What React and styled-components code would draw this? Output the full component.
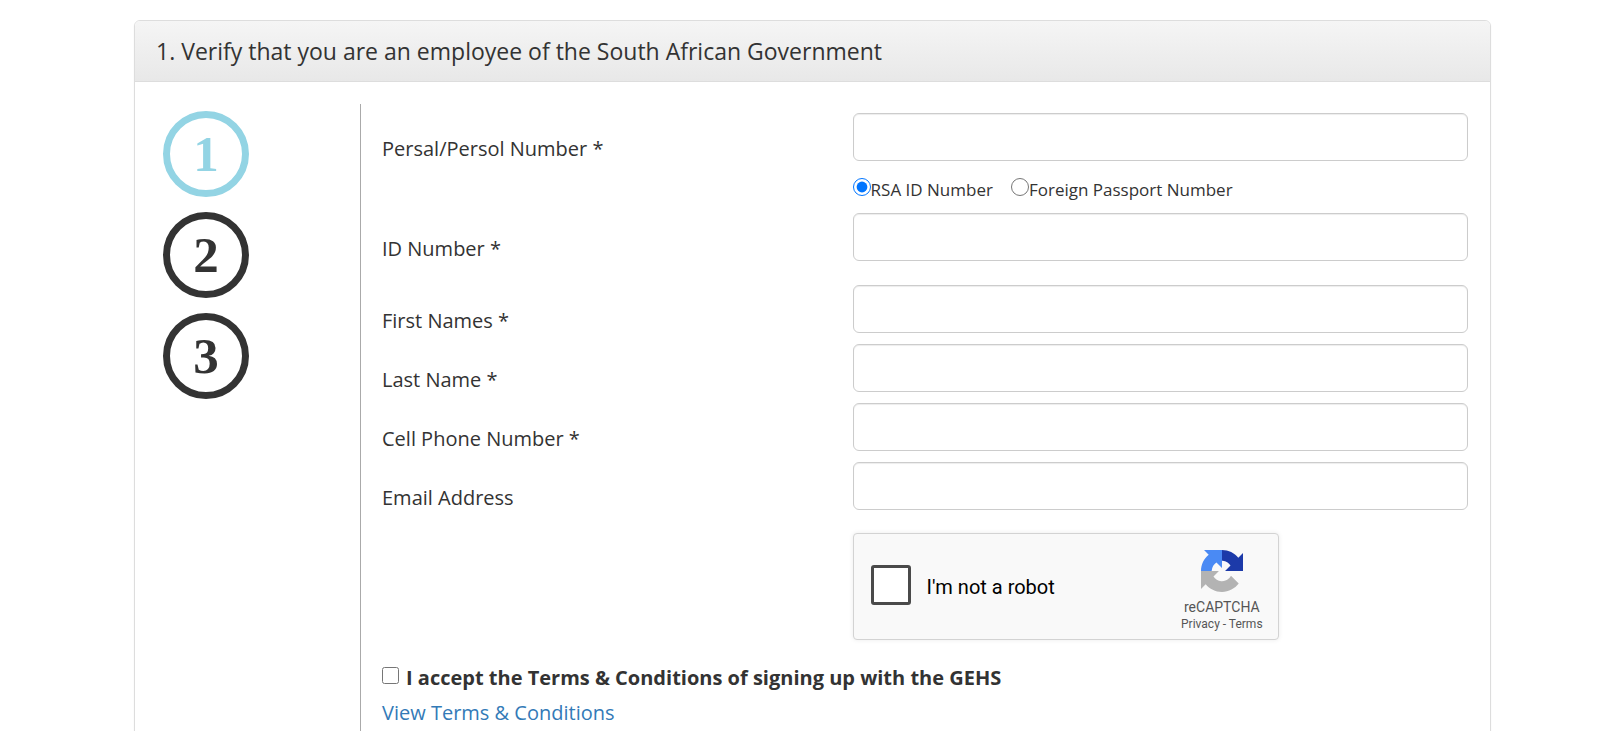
import React, { useState } from "react";
import styled, { createGlobalStyle } from "styled-components";

const steps = [1, 2, 3];

const personalFields = [
    { id: "firstNames", label: "First Names *", type: "text" },
    { id: "lastName", label: "Last Name *", type: "text" },
    { id: "cellPhone", label: "Cell Phone Number *", type: "tel" },
    { id: "email", label: "Email Address", type: "email" },
];

function Field({ id, label, type = "text" }) {
    return (
        <Row>
            <Label htmlFor={id}>{label}</Label>
            <TextInput id={id} name={id} type={type} />
        </Row>
    );
}

function RecaptchaLogo() {
    return (
        <Logo viewBox="0 0 64 64" aria-hidden="true">
            <path fill="#1c3aa9" d="M64 32V4.700l-7.160 7.160C50.980 4.670 42.050.09 32 .09v16.270c.485 0 .86.057 1.135.163 4.976.393 9.288 3.140 11.828 7.124L36.660 32z" />
            <path fill="#4a8af4" d="M32 .09H4.600l7.160 7.160C4.580 13.110 0 22.040 0 32h16.270c0-.485.057-.86.163-1.135.393-4.976 3.140-9.288 7.124-11.828L32 27.340z" />
            <path fill="#b3b3b3" d="M0 32v27.270l7.160-7.160c5.860 7.173 14.790 11.754 24.790 11.754 10.408 0 19.656-4.960 25.500-12.645L45.710 39.360a15.550 15.550 0 0 1-4.754 5.334c-2.050 1.600-4.952 2.906-8.968 2.906-.485 0-.86-.057-1.135-.163-4.976-.393-9.288-3.140-11.828-7.124L27.330 32z" />
        </Logo>
    );
}

function Recaptcha() {
    return (
        <Captcha>
            <CaptchaLabel>
                <CaptchaCheck type="checkbox" name="notRobot" />
                I'm not a robot
            </CaptchaLabel>
            <CaptchaBrand>
                <RecaptchaLogo />
                <BrandName>reCAPTCHA</BrandName>
                <BrandLinks>
                    <a href="#privacy">Privacy</a> - <a href="#terms">Terms</a>
                </BrandLinks>
            </CaptchaBrand>
        </Captcha>
    );
}

function App() {
    const [idType, setIdType] = useState("rsa");

    return (
        <Page>
            <GlobalStyle />
            <Panel>
                <PanelHeading>1. Verify that you are an employee of the South African Government</PanelHeading>
                <PanelBody>
                    <Steps>
                        {steps.map((step) => (
                            <Step key={step} $active={step === 1}>{step}</Step>
                        ))}
                    </Steps>
                    <Form>
                        <Field id="persal" label="Persal/Persol Number *" />
                        <Row>
                            <RadioGroup>
                                <RadioLabel>
                                    <Radio type="radio" name="idType" checked={idType === "rsa"} onChange={() => setIdType("rsa")} />
                                    RSA ID Number
                                </RadioLabel>
                                <RadioLabel>
                                    <Radio type="radio" name="idType" checked={idType === "passport"} onChange={() => setIdType("passport")} />
                                    Foreign Passport Number
                                </RadioLabel>
                            </RadioGroup>
                        </Row>
                        <Field id="idNumber" label="ID Number *" />
                        <Personal>
                            {personalFields.map((field) => (
                                <Field key={field.id} {...field} />
                            ))}
                        </Personal>
                        <Row>
                            <Recaptcha />
                        </Row>
                        <Accept>
                            <AcceptCheck type="checkbox" name="accept" />
                            I accept the Terms &amp; Conditions of signing up with the GEHS
                        </Accept>
                        <TermsLink href="#view-terms">View Terms &amp; Conditions</TermsLink>
                    </Form>
                </PanelBody>
            </Panel>
        </Page>
    );
}

const GlobalStyle = createGlobalStyle`
    *{
        box-sizing: border-box;
    }
    body{
        margin: 0;
        background: #ffffff;
        color: #333333;
        font-family: "Open Sans", sans-serif;
        font-size: 20px;
        line-height: 28px;
    }
`;

const Page = styled.main`
    padding: 20px 109px 0 134px;
`;

const Panel = styled.section`
    border: 1px solid #dddddd;
    border-radius: 6px;
    box-shadow: 0 1px 2px rgba(0, 0, 0, 0.05);
    overflow: hidden;
`;

const PanelHeading = styled.h1`
    margin: 0;
    padding: 15px 21px;
    border-bottom: 1px solid #dddddd;
    background: linear-gradient(to bottom, #f5f5f5, #e8e8e8);
    font-size: 23px;
    font-weight: 400;
    line-height: 30px;
`;

const PanelBody = styled.div`
    display: flex;
    padding: 22px;
`;

const Steps = styled.div`
    display: flex;
    flex: 0 0 203px;
    flex-direction: column;
    gap: 15px;
    padding: 7px 6px;
`;

const Step = styled.div`
    display: flex;
    align-items: center;
    justify-content: center;
    width: 86px;
    height: 86px;
    border: 7px solid currentColor;
    border-radius: 50%;
    color: ${({ $active }) => ($active ? "#93d4e4" : "#333333")};
    font-family: "Liberation Serif", serif;
    font-size: 51px;
    font-weight: 700;
    line-height: 56px;
`;

const Form = styled.form`
    display: flex;
    flex: 1;
    flex-direction: column;
    min-width: 0;
    padding: 9px 0 40px 21px;
    border-left: 1px solid #aaaaaa;
`;

const Row = styled.div`
    display: grid;
    grid-template-columns: 13fr 17fr;
`;

const Label = styled.label`
    padding-top: 22px;
    line-height: 28px;
    height: 48px;
`;

const TextInput = styled.input`
    width: 100%;
    height: 48px;
    padding: 8px 16px;
    border: 1px solid #cccccc;
    border-radius: 6px;
    background: #ffffff;
    box-shadow: inset 0 1px 1px rgba(0, 0, 0, 0.075);
    color: #555555;
    font: inherit;
`;

const RadioGroup = styled.div`
    display: flex;
    grid-column: 2;
    gap: 18px;
    padding: 17px 0 11px;
    font-size: 17px;
    line-height: 24px;
`;

const RadioLabel = styled.label`
    display: flex;
`;

const Radio = styled.input`
    width: 18px;
    height: 18px;
    margin: 0;
    accent-color: #0075ff;
`;

const Personal = styled.div`
    display: flex;
    flex-direction: column;
    gap: 11px;
    padding: 24px 0 23px;
`;

const Captcha = styled.div`
    display: flex;
    grid-column: 2;
    justify-content: space-between;
    width: 426px;
    height: 107px;
    padding: 0 15px 0 17px;
    border: 1px solid #d3d3d3;
    border-radius: 4px;
    background: #f9f9f9;
    box-shadow: 0 0 5px rgba(0, 0, 0, 0.08);
    font-family: Roboto, sans-serif;
`;

const CaptchaLabel = styled.label`
    display: flex;
    align-items: center;
    gap: 16px;
    color: #000000;
    font-size: 20px;
`;

const CaptchaCheck = styled.input`
    appearance: none;
    width: 40px;
    height: 40px;
    margin: 0 0 4px;
    border: 3px solid #4a4a4a;
    border-radius: 3px;
    background: #ffffff;
`;

const CaptchaBrand = styled.div`
    display: flex;
    flex-direction: column;
    align-items: center;
    padding-top: 16px;
    color: #555555;
`;

const Logo = styled.svg`
    width: 42px;
    height: 42px;
`;

const BrandName = styled.span`
    margin-top: 6px;
    font-size: 14px;
    line-height: 18px;
`;

const BrandLinks = styled.span`
    font-size: 12px;
    line-height: 16px;

    a{
        color: inherit;
        text-decoration: none;
    }
`;

const Accept = styled.label`
    display: flex;
    gap: 7px;
    margin-top: 24px;
    font-weight: 700;
`;

const AcceptCheck = styled.input`
    width: 17px;
    height: 17px;
    margin: 3px 0 0;
`;

const TermsLink = styled.a`
    align-self: flex-start;
    margin-top: 7px;
    color: #337ab7;
    text-decoration: none;
`;

export default App;
